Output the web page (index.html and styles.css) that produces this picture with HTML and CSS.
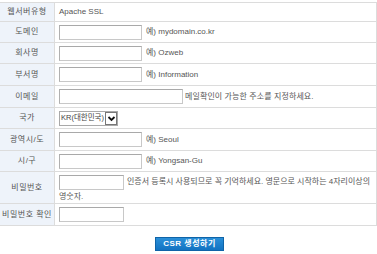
FILE: index.html
```html
<!DOCTYPE html>
<html lang="ko">
<head>
<meta charset="utf-8">
<link rel="stylesheet" href="styles.css">
</head>
<body>
<table class="csr">
  <tr class="h19"><th>웹서버유형</th><td>Apache SSL</td></tr>
  <tr class="h21"><th>도메인</th><td><span class="inp w82"></span><span class="hint">예) mydomain.co.kr</span></td></tr>
  <tr class="h21"><th>회사명</th><td><span class="inp w82"></span><span class="hint">예) Ozweb</span></td></tr>
  <tr class="h22"><th>부서명</th><td><span class="inp w82"></span><span class="hint">예) Information</span></td></tr>
  <tr class="h22"><th>이메일</th><td><span class="inp w124"></span><span class="hint2">메일확인이 가능한 주소를 지정하세요.</span></td></tr>
  <tr class="h21"><th>국가</th><td><span class="sel"><span class="selv">KR(대한민국)</span><span class="arrow"><svg width="9" height="9" viewBox="0 0 9 9"><path d="M1.5 3 L4.5 6 L7.5 3" fill="none" stroke="#111" stroke-width="1.8"/></svg></span></span></td></tr>
  <tr class="h22"><th>광역시/도</th><td><span class="inp w82"></span><span class="hint">예) Seoul</span></td></tr>
  <tr class="h21"><th>시/구</th><td><span class="inp w82"></span><span class="hint">예) Yongsan-Gu</span></td></tr>
  <tr class="h32"><th>비밀번호</th><td class="pw"><span class="inp w64"></span><span class="hint3">인증서 등록시 사용되므로 꼭 기억하세요. 영문으로 시작하는 4자리이상의 영숫자.</span></td></tr>
  <tr class="h22"><th>비밀번호 확인</th><td><span class="inp w64"></span></td></tr>
</table>
<div class="btnrow"><span class="btn">CSR 생성하기</span></div>
</body>
</html>
```
FILE: styles.css
```css
html, body { margin: 0; padding: 0; background: #fff; }
body { font-family: "Liberation Sans", "Noto Sans CJK KR", sans-serif; font-size: 8px; color: #555; }
.csr { border-collapse: collapse; width: 377px; margin-top: 2px; table-layout: fixed; }
.csr th, .csr td { border-top: 1px solid #dcdcdc; border-bottom: 1px solid #dcdcdc; padding: 0; vertical-align: middle; }
.csr th { width: 54px; background: #eef3fa; font-weight: normal; text-align: center; border-right: 1px solid #dcdcdc; color: #555; letter-spacing: 0.5px; white-space: nowrap; line-height: 10px; }
.csr td { padding-left: 4px; border-right: 1px solid #dcdcdc; line-height: 10px; }
.h19 { height: 19px; }
.h21 { height: 21px; }
.h22 { height: 22px; }
.h32 { height: 32px; }
.inp { display: inline-block; vertical-align: middle; height: 13px; border: 1px solid #c8c8c8; border-top-color: #a9a9a9; border-left-color: #b0b0b0; background: #fff; }
.w82 { width: 81px; }
.w124 { width: 122px; }
.w64 { width: 63px; }
.hint { margin-left: 4px; vertical-align: middle; }
.hint2 { margin-left: 2px; vertical-align: middle; letter-spacing: 0.1px; }
.pw { line-height: 13px !important; padding-top: 2px !important; }
.hint3 { margin-left: 3px; letter-spacing: 0; }
.sel { display: inline-flex; align-items: center; vertical-align: middle; height: 13px; border: 1px solid #a9a9a9; background: #fff; }
.selv { padding: 0 1px 0 1px; font-size: 7.5px; letter-spacing: 0; color: #444; }
.arrow { display: flex; align-items: center; justify-content: center; width: 10px; height: 11px; border: 1px solid #777; }
.btnrow { display: flex; justify-content: center; margin-top: 11px; padding-left: 2px; }
.btn { display: inline-block; background: linear-gradient(#2a8fd8, #1273c2); border: 1px solid #0f64a8; color: #fff; font-weight: bold; font-size: 8px; line-height: 12px; padding: 0 7px; letter-spacing: 0.5px; }
```
